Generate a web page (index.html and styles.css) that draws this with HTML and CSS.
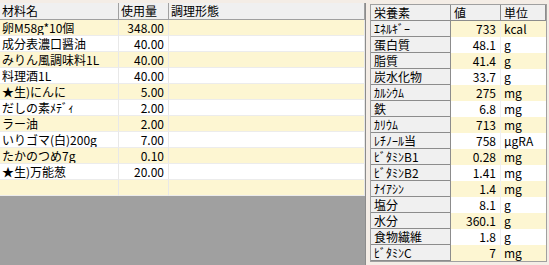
FILE: index.html
```html
<!DOCTYPE html>
<html lang="ja">
<head>
<meta charset="utf-8">
<title>材料</title>
<link rel="stylesheet" href="styles.css">
</head>
<body>
<div class="app">
  <div class="left">
    <div class="lrow lhead">
      <div class="c">材料名</div><div class="c">使用量</div><div class="c">調理形態</div>
    </div>
    <div class="lrow y"><div class="c">卵M58g*10個</div><div class="c num">348.00</div><div class="c"></div></div>
    <div class="lrow"><div class="c">成分表濃口醤油</div><div class="c num">40.00</div><div class="c"></div></div>
    <div class="lrow y"><div class="c">みりん風調味料1L</div><div class="c num">40.00</div><div class="c"></div></div>
    <div class="lrow"><div class="c">料理酒1L</div><div class="c num">40.00</div><div class="c"></div></div>
    <div class="lrow y"><div class="c">★生)にんに</div><div class="c num">5.00</div><div class="c"></div></div>
    <div class="lrow"><div class="c">だしの素ﾒﾃﾞｨ</div><div class="c num">2.00</div><div class="c"></div></div>
    <div class="lrow y"><div class="c">ラー油</div><div class="c num">2.00</div><div class="c"></div></div>
    <div class="lrow"><div class="c">いりゴマ(白)200g</div><div class="c num">7.00</div><div class="c"></div></div>
    <div class="lrow y"><div class="c">たかのつめ7g</div><div class="c num">0.10</div><div class="c"></div></div>
    <div class="lrow"><div class="c">★生)万能葱</div><div class="c num">20.00</div><div class="c"></div></div>
    <div class="lrow y"><div class="c"></div><div class="c num"></div><div class="c"></div></div>
  </div>
  <div class="right">
    <div class="rrow rhead"><div class="n">栄養素</div><div class="n">値</div><div class="n">単位</div></div>
    <div class="rrow y"><div class="n">ｴﾈﾙｷﾞｰ</div><div class="v">733</div><div class="u">kcal</div></div>
    <div class="rrow"><div class="n">蛋白質</div><div class="v">48.1</div><div class="u">g</div></div>
    <div class="rrow y"><div class="n">脂質</div><div class="v">41.4</div><div class="u">g</div></div>
    <div class="rrow"><div class="n">炭水化物</div><div class="v">33.7</div><div class="u">g</div></div>
    <div class="rrow y"><div class="n">ｶﾙｼｳﾑ</div><div class="v">275</div><div class="u">mg</div></div>
    <div class="rrow"><div class="n">鉄</div><div class="v">6.8</div><div class="u">mg</div></div>
    <div class="rrow y"><div class="n">ｶﾘｳﾑ</div><div class="v">713</div><div class="u">mg</div></div>
    <div class="rrow"><div class="n">ﾚﾁﾉｰﾙ当</div><div class="v">758</div><div class="u">μgRA</div></div>
    <div class="rrow y"><div class="n">ﾋﾞﾀﾐﾝB1</div><div class="v">0.28</div><div class="u">mg</div></div>
    <div class="rrow"><div class="n">ﾋﾞﾀﾐﾝB2</div><div class="v">1.41</div><div class="u">mg</div></div>
    <div class="rrow y"><div class="n">ﾅｲｱｼﾝ</div><div class="v">1.4</div><div class="u">mg</div></div>
    <div class="rrow"><div class="n">塩分</div><div class="v">8.1</div><div class="u">g</div></div>
    <div class="rrow y"><div class="n">水分</div><div class="v">360.1</div><div class="u">g</div></div>
    <div class="rrow"><div class="n">食物繊維</div><div class="v">1.8</div><div class="u">g</div></div>
    <div class="rrow y"><div class="n">ﾋﾞﾀﾐﾝC</div><div class="v">7</div><div class="u">mg</div></div>
  </div>
</div>
</body>
</html>
```
FILE: styles.css
```css
* { box-sizing: border-box; }
html, body { margin: 0; padding: 0; }
body {
  background: #f4ede6;
  font-family: "Noto Sans CJK JP", "Liberation Sans", sans-serif;
  font-size: 12px;
  color: #000;
  overflow: hidden;
}
.app {
  display: flex;
  gap: 4px;
  padding-top: 3px;
  height: 265px;
}
.left {
  width: 366px;
  height: 262px;
  background: #a0a0a0;
  border-right: 1px solid #8c8c8c;
  display: flex;
  flex-direction: column;
}
.lrow {
  display: grid;
  grid-template-columns: 119px 50px 1fr;
  height: 16px;
  background: #ffffff;
}
.lrow.y { background: #fdf6d2; }
.lrow .c {
  border-right: 1px solid #e8e8e8;
  border-bottom: 1px solid #ececec;
  line-height: 15px;
  padding-left: 2px;
  white-space: nowrap;
  overflow: hidden;
}
.lrow .c.num { text-align: right; padding-right: 4px; }
.lrow.lhead {
  height: 17px;
  background: #f0f0f0;
}
.lrow.lhead .c {
  border-right: 1px solid #a0a0a0;
  border-bottom: 1px solid #a0a0a0;
  line-height: 16px;
}
.right {
  margin-top: 1px;
  width: 177px;
  height: 258px;
  border: 1px solid #a0a0a0;
  display: flex;
  flex-direction: column;
  background: #fff;
}
.rrow {
  display: grid;
  grid-template-columns: 80px 50px 45px;
  height: 16px;
  background: #ffffff;
}
.rrow.y { background: #fdf6d2; }
.rrow .n {
  background: #f0f0f0;
  border-right: 1px solid #8c8c8c;
  border-bottom: 1px solid #8c8c8c;
  padding-left: 3px;
  line-height: 15px;
  white-space: nowrap;
  overflow: hidden;
}
.rrow .v {
  text-align: right;
  padding-right: 4px;
  line-height: 15px;
  border-right: 1px solid #f0f0f0;
}
.rrow .u {
  padding-left: 3px;
  line-height: 15px;
}
.rrow.rhead .n { border-bottom: 1px solid #8c8c8c; }
```
